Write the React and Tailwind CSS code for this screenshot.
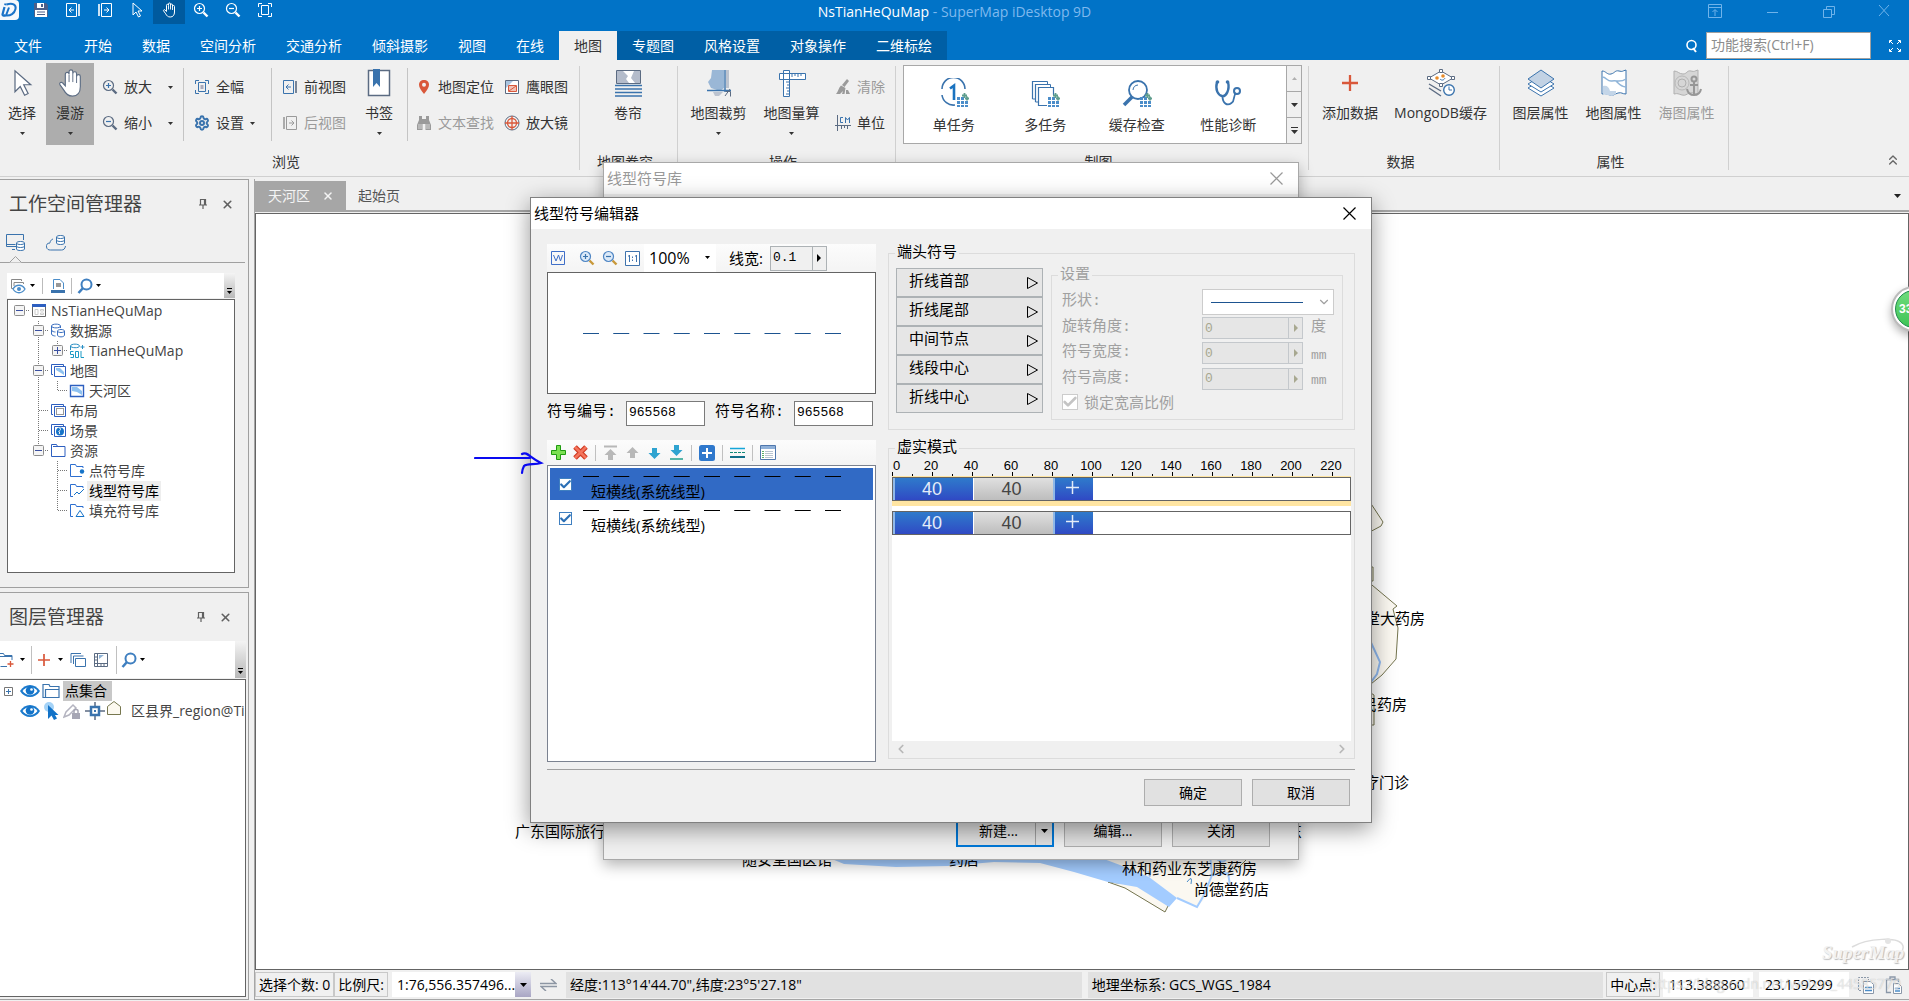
import { useState } from 'react'
import { Check, X, ChevronDown, ChevronLeft, ChevronRight, ChevronsUp, Settings } from 'lucide-react'

const BLUE = '#3a73ad'
const DARK = '#5b6b82'
const RED = '#d9583b'
const GREY = '#9a9a9a'

function Icon({ w = 16, h = 16, box, children, className = '' }) {
  return (
    <svg width={w} height={h} viewBox={box || `0 0 ${w} ${h}`} fill="none" className={`shrink-0 ${className}`} aria-hidden="true">
      {children}
    </svg>
  )
}

const Caret = ({ className = '' }) => (
  <Icon w={7} h={4} className={className}><path d="M0 0h7L3.500 4z" fill="currentColor" /></Icon>
)
const SmallCaret = ({ className = '' }) => (
  <Icon w={5} h={3} className={className}><path d="M0 0h5L2.500 3z" fill="currentColor" /></Icon>
)

/* ---------- icons ---------- */

const ARROW_PATH = 'M4 1v12l3-3 2.500 5 2-1-2.500-5h4z'
const HAND_PATH = 'M5.500 9.500V3.300a1 1 0 0 1 2 0V2a1 1 0 0 1 2 0v1a1 1 0 0 1 2 0v1.500a1 1 0 0 1 2 0V10c0 3-1.500 5-4.200 5-2.500 0-3.600-1.300-4.600-3.200L2.600 8.900c-.5-1 .8-1.700 1.500-.9z'

const PointerIcon = ({ size = 16, stroke = '#fff', fill = 'none' }) => (
  <Icon w={size} h={size} box="0 0 16 16"><path d={ARROW_PATH} stroke={stroke} fill={fill} strokeWidth={size > 20 ? 0.7 : 1} /></Icon>
)
const HandIcon = ({ size = 16, stroke = '#fff', fill = 'none' }) => (
  <Icon w={size} h={size} box="0 0 16 16">
    <path d={HAND_PATH} stroke={stroke} fill={fill} strokeWidth={size > 20 ? 0.6 : 1} />
    <path d="M7.500 3.500v4M9.500 3v4.500M11.500 4v4" stroke={stroke} strokeWidth={size > 20 ? 0.5 : 0.9} />
  </Icon>
)
const ZoomIcon = ({ minus, ring = DARK, mark = BLUE, handle = DARK, fill = 'none', size = 16 }) => (
  <Icon w={size} h={size} box="0 0 16 16">
    <path d="m10.500 10.500 4 4" stroke={handle} strokeWidth="2.400" />
    <circle cx="6.500" cy="6.500" r="5" stroke={ring} strokeWidth="1.200" fill={fill} />
    <path d={minus ? 'M4 6.500h5' : 'M4 6.500h5M6.500 4v5'} stroke={mark} strokeWidth="1.200" />
  </Icon>
)
const ExtentIcon = ({ c = '#fff', inner = 'none' }) => (
  <Icon>
    <path d="M1.500 5V1.500H5M11 1.500h3.500V5M14.500 11v3.500H11M5 14.500H1.500V11" stroke={c} />
    <path d="M4.500 3.500h7v9h-7z" stroke={c} />
    <path d="M6.500 6h3v4h-3z" fill={inner} />
  </Icon>
)
const ViewIcon = ({ next, c = BLUE, side = DARK }) => (
  <Icon>
    <path d={next ? 'M4.500 1.500h10v13h-10z' : 'M1.500 1.500h10v13h-10z'} stroke={c} />
    <path d={next ? 'M2 2v12' : 'M14 2v12'} stroke={side} strokeWidth="1.600" />
    <path d={next ? 'M7 8h5M9.500 5.500 12 8l-2.500 2.500' : 'M9 8H4M6.500 5.500 4 8l2.500 2.500'} stroke={c} />
  </Icon>
)
const SaveIcon = () => (
  <Icon>
    <path d="M1 1h12l2 2v12H1z" fill="#4a5f8a" />
    <path d="M4 1h7v5H4z" fill="#fff" /><path d="M8 2h2v3H8z" fill="#4a5f8a" />
    <path d="M2 8h12v7H2z" fill="#fff" /><path d="M4 10h8M4 12.500h8" stroke="#4a5f8a" />
  </Icon>
)
const LogoIcon = () => (
  <Icon w={20} h={20}>
    <rect x="-4" width="23" height="20" rx="4" fill="#f4f8fc" />
    <path d="M4.500 7 2.500 14.500c0 1.500 1.500 1.500 3 .5M5.600 3.500 5.200 5.200" stroke="#1a73c8" strokeWidth="2.200" />
    <path d="M6.500 4.500c6-2 10 0 9 4.500-1 4.500-5 7-9.500 6.500L9 7.500" stroke="#1a73c8" strokeWidth="2" />
  </Icon>
)
const BookmarkIcon = () => (
  <Icon w={24} h={28}>
    <path d="M1.500 1.500h21v25h-21z" stroke={DARK} fill="#fff" strokeWidth="1.500" />
    <path d="M6 0h7v18l-3.500-4L6 18z" fill={BLUE} />
  </Icon>
)
const PinIcon = () => (
  <Icon><path d="M8 1c-3 0-5 2-5 4.800C3 9.500 8 15 8 15s5-5.500 5-9.200C13 3 11 1 8 1z" fill={RED} /><circle cx="8" cy="5.800" r="2" fill="#f0f0f0" /></Icon>
)
const EagleIcon = () => (
  <Icon>
    <path d="M1.500 1.500h13v13h-13z" stroke={DARK} fill="#fff" />
    <path d="M2 2h7L2 9z" fill="#a9c4e0" />
    <path d="M4.500 6.500h8v6h-8z" stroke={RED} fill="#f2c3b8" /><path d="m5 12 7-5" stroke={RED} />
  </Icon>
)
const BinocularIcon = () => (
  <Icon>
    <path d="M3 1h3v3h4V1h3v4l2 5v5H9.500V9h-3v6H1v-5l2-5z" fill={GREY} />
    <path d="M3 9v5M5 9v5M11 9v5M13 9v5" stroke="#f0f0f0" strokeWidth=".7" />
  </Icon>
)
const TargetIcon = () => (
  <Icon><circle cx="8" cy="8" r="7" stroke={DARK} /><circle cx="8" cy="8" r="4.500" stroke={RED} strokeWidth="1.300" /><path d="M8 1v14M1 8h14" stroke={RED} strokeWidth="1.300" /></Icon>
)
const SwipeIcon = () => (
  <Icon w={27} h={28}>
    <path d="M1.500 1.500h24v13h-24z" stroke={DARK} fill="#fff" />
    <path d="M2 2h6l5 5-2 3 3 4H2zM19 2h6v12h-5l-4-5z" fill="#b4bccb" />
    <path d="M0 16.500h27M0 20h27M0 23.500h27M0 27h27" stroke={BLUE} strokeWidth="1.600" />
  </Icon>
)
const ClipIcon = () => (
  <Icon w={28} h={28}>
    <path d="M7 1h12v18l-4 3-9-3-3-6 3-4z" fill="#9ab7d6" />
    <path d="M8 23h10l-4 4h-4zM21 1h3v18h-3z" fill="#bcc3cf" />
    <path d="M2 21.500h24M20 1v22" stroke={BLUE} strokeWidth="1.400" />
    <path d="M20.500 22.500h5v5M25 20l-5 7" stroke={DARK} />
  </Icon>
)
const MeasureIcon = () => (
  <Icon w={28} h={28}>
    <path d="M1.500 4.500h26v6h-26zM5.500 1.500h6v26h-6z" stroke={BLUE} fill="#fff" />
    <path d="M6 5h5v5H6z" fill="#fff" />
    <path d="M14 5v3M17 5v2M20 5v3M23 5v2M8 13h3M9 16h2M8 19h3M9 22h2M8 25h3" stroke={BLUE} />
  </Icon>
)
const BroomIcon = () => (
  <Icon><path d="M12 0 14 2 9.500 8 7 6z" fill={GREY} /><path d="M6 6.500 10.500 9l-1 6H7l1-3-3 3H1c2-2 2.500-6 5-8.500zM11 11h2l2 4h-4z" fill={GREY} /></Icon>
)
const UnitIcon = () => (
  <Icon>
    <path d="M2.500 0v16M0 10.500h16M6.500 10v4M9.500 10v3M12.500 10v4" stroke={DARK} />
    <path d="M8 2.500H5.500v5H8M10.500 8V2.500l2 2.500 2-2.500V8" stroke={BLUE} />
  </Icon>
)
const Bits = () => (
  <g>
    <path d="M18 19h3v3h-3zM22 19h3v3h-3zM18 23h3v3h-3zM22 23h3v3h-3zM26 23h3v3h-3zM18 27h3v2h-3zM22 27h3v2h-3zM26 27h3v2h-3z" fill="#4b8dc9" />
    <path d="M23 17.500h5M25.500 15v5M26 20.500h4M28 18.500v4" stroke="#5f9d8d" strokeWidth="1.800" />
  </g>
)
const SingleTaskIcon = () => (
  <Icon w={30} h={30}>
    <path d="M3 11A11.500 11.500 0 0 1 26 11M3 17a11.500 11.500 0 0 0 13 10" stroke={BLUE} strokeWidth="1.600" />
    <path d="M11 10.500 15 7.500V22" stroke="#1a73c0" strokeWidth="2.600" />
    <Bits />
  </Icon>
)
const MultiTaskIcon = () => (
  <Icon w={30} h={30}>
    <path d="M2.500 21V3.500h15M5.500 24V6.500h15M17 27.500H8.500v-18h15V17" stroke={BLUE} strokeWidth="1.200" />
    <path d="M2.500 21h3M5.500 24h3M17.500 3.500v3M20.500 6.500v3" stroke={BLUE} />
    <Bits />
  </Icon>
)
const CacheCheckIcon = () => (
  <Icon w={30} h={30}>
    <circle cx="16" cy="12" r="9" stroke={BLUE} strokeWidth="1.800" /><path d="M11 12a5.500 5.500 0 0 1 5-5" stroke={BLUE} />
    <path d="m10 19-8 8" stroke={BLUE} strokeWidth="3.600" />
    <Bits />
  </Icon>
)
const DiagnoseIcon = () => (
  <Icon w={30} h={30}>
    <path d="M4 4c-2 8 1 13 5 14s8-6 6-14" stroke={BLUE} strokeWidth="2.400" />
    <path d="M9.500 18c0 8 5 10 9 7 4-2.500 1-7 4.500-10" stroke={BLUE} strokeWidth="1.800" />
    <circle cx="24" cy="13" r="3" stroke={BLUE} strokeWidth="2" /><circle cx="4.500" cy="4" r="1.800" fill={BLUE} /><circle cx="14.500" cy="4" r="1.800" fill={BLUE} />
  </Icon>
)
const AddIcon = ({ size = 16 }) => (
  <Icon w={size} h={size} box="0 0 14 14"><path d="M7 0v14M0 7h14" stroke={RED} strokeWidth="2" /></Icon>
)
const MongoIcon = () => (
  <Icon w={28} h={28}>
    <path d="m2 9 12-7 12 7-12 7z" stroke={DARK} fill="#fff" /><path d="M12.500.5h3v3h-3zM.5 7.500h3v3h-3zM24.500 7.500h3v3h-3zM12.500 14.500h3v3h-3z" fill="#fff" stroke={DARK} />
    <path d="m2 15 12 7M2 19l12 8" stroke={DARK} strokeWidth="1.400" />
    <circle cx="10" cy="9" r="1.800" fill="#e78c2c" /><circle cx="16" cy="7" r="1.800" fill="#e78c2c" /><path d="M13 10c2 2 4 1 5-1" stroke={BLUE} />
    <circle cx="22" cy="21" r="5.300" stroke={BLUE} strokeWidth="1.400" fill="#fff" /><path d="M22 17.500V21h3" stroke={BLUE} />
  </Icon>
)
const LayersIcon = () => (
  <Icon w={28} h={28}>
    <path d="m1 19 13 8 13-8-13-8z" fill="#fff" stroke={BLUE} /><path d="m1 15 13 8 13-8-13-8z" fill="#fff" stroke={BLUE} />
    <path d="m1 10 13-9 13 9-13 9z" fill="#c2d2e4" stroke={BLUE} />
  </Icon>
)
const MapPropIcon = () => (
  <Icon w={28} h={28}>
    <path d="M2 2c4 0 5 4 9 3s4-4 8-3 3 0 7-1v24c-4 0-4-2-8-1s-4 3-8 2-4-2-8-1z" fill="#fff" stroke={BLUE} />
    <path d="M3 17c4-1 6 1 7 5h6v3l-4 2-9-2z" fill="#c3d5e8" /><path d="M2 8c5 0 5 5 10 4s8 2 14-2M16 12c3 3 5 6 10 6" stroke="#8fb4d8" strokeWidth="1.500" />
  </Icon>
)
const SeaMapIcon = () => (
  <Icon w={30} h={28}>
    <path d="M2 2c4 0 5 3 9 3s4-4 8-3 3 0 7-1v24c-4 0-4-2-8-1s-4 3-8 2-4-2-8-1z" fill="#d6d6d6" stroke="#b0b0b0" />
    <circle cx="10" cy="14" r="4" stroke="#b0b0b0" /><circle cx="10" cy="14" r="7" stroke="#b8b8b8" />
    <circle cx="22" cy="10" r="2.500" stroke="#979797" strokeWidth="2" /><path d="M22 12v14M18 16h8M15 20c1 5 4 6 7 6s6-1 7-6" stroke="#979797" strokeWidth="2" />
  </Icon>
)

const PushPin = () => (
  <Icon w={8} h={10}><path d="M1.500 0v5.500M1.500.5H6M5.500 0v5.500M6.500 0v5.500M0 6h8M4 6v4" stroke="#606060" strokeWidth="1.200" /></Icon>
)
const FindIcon = () => (
  <Icon><circle cx="9.500" cy="6.500" r="5" stroke="#3f7fc0" strokeWidth="2" /><path d="m6 10-4.500 5" stroke="#3f7fc0" strokeWidth="2.600" /></Icon>
)
const Db = ({ x, y }) => (
  <path transform={`translate(${x} ${y})`} d="M.5 2v6c0 2 8 2 8 0V2c0-2-8-2-8 0c0 2 8 2 8 0M.5 5c0 2 8 2 8 0" stroke={BLUE} fill="#fff" />
)
const WorkspaceDbIcon = () => (
  <Icon w={20} h={18}><path d="M9 15.500H6M10 12.500H.5v-12h17V6M.5 10.500h9" stroke={BLUE} /><Db x={10} y={7} /></Icon>
)
const CloudDbIcon = () => (
  <Icon w={20} h={18}><path d="M7 5C4 6 4 9 4 9c-3 0-4 2-3.500 4 .5 2.500 2 3 4 3h11c2 0 3.500-1 4-4" stroke={BLUE} /><Db x={10} y={1} /></Icon>
)

const TREE_ICONS = {
  workspace: <Icon><path d="M1.500 1.500h13v12h-13z" stroke="#666" fill="#fff" /><path d="M1 1h14v3H1z" fill="#2d5fc0" /><path d="M4 6.500h3v5H4zM9.500 6.500h3v1.500h-3zM9.500 10h3v1.500h-3z" stroke="#ccc" /></Icon>,
  datasource: <Icon><path d="M1.500 3v8c0 1.500 3 2 4 2M1.500 3c0-2.500 9-2.500 9 0s-9 2.500-9 0M1.500 7c0 1.500 3 2 4 2M10.500 3v2" stroke="#3b6fc0" /><path d="M7.500 8v4c0 2.500 7 2.500 7 0V8c0-2-7-2-7 0s7 2 7 0" stroke="#3b6fc0" fill="#fff" /></Icon>,
  sql: <Icon><path d="M1.500 7V3c0-2.500 9-2.500 9 0s-9 2-9 0M13.500 2v4M11.500 4h4" stroke="#2b8fc4" /><path d="M4.500 8.500h-3v3h3v3h-3M6.500 8.500h3v6h-3zM12 8v6.500h3" stroke="#1c9ac4" /></Icon>,
  maps: <Icon><path d="M3 11.500H1.500v-10h12V3" stroke="#2d5fc0" /><path d="M4.500 3.500h11v10h-11z" stroke="#2d5fc0" fill="#fff" /><path d="M6 5h4l4 4v3l-3-2-5-3z" fill="#8ec1f0" /></Icon>,
  map: <Icon><path d="M1.500 2.500h13v11h-13z" stroke="#2d5fc0" fill="#fff" strokeWidth="1.400" /><path d="M3 4h5l5 4v4l-5-3-5-1z" fill="#8ec1f0" /></Icon>,
  layout: <Icon><path d="M3 11.500H1.500v-10h12V3" stroke="#2d5fc0" /><path d="M4.500 3.500h11v10h-11z" stroke="#2d5fc0" fill="#fff" /><path d="M6.500 5.500h7v6h-7z" stroke="#333" strokeDasharray="1 1" /></Icon>,
  scene: <Icon><path d="M3 11.500H1.500v-10h12V3" stroke="#2d5fc0" /><path d="M4.500 3.500h11v10h-11z" stroke="#2d5fc0" fill="#fff" /><circle cx="10" cy="8.500" r="4" fill="#1673c8" /><path d="M9 5c3 0 1 3 0 3s2 2 0 3" stroke="#fff" /></Icon>,
  folder: <Icon><path d="M1.500 13.500v-12h5l1 2h7.500v10zM3 3.500h5" stroke="#2d5fc0" fill="#fff" /></Icon>,
  point: <Icon><path d="M13 13.500H1.500v-12h5l1 2H14V5" stroke="#2d6fd0" /><circle cx="13" cy="8.500" r="2.200" fill="#1673c8" /></Icon>,
  line: <Icon><path d="M4 13.500H1.500v-12h5l1 2H14V5" stroke="#2d6fd0" /><path d="m5 12 3-3 2 2 5-5" stroke="#1673c8" /></Icon>,
  fill: <Icon><path d="M4 13.500H1.500v-12h5l1 2H14V5" stroke="#2d6fd0" /><path d="m7 13.500 4-6 4 6z" stroke="#1673c8" /></Icon>,
}

/* ---------- title bar + ribbon ---------- */

const MENU = ['开始', '数据', '空间分析', '交通分析', '倾斜摄影', '视图', '在线']
const CONTEXT_MENU = ['专题图', '风格设置', '对象操作', '二维标绘']

function TitleBar() {
  return (
    <header className="bg-[#0173c7] text-white">
      <div className="relative flex h-[31px] items-start justify-between">
        <div className="flex items-start">
          <LogoIcon />
          <div className="ml-[5px] flex">
            {[<SaveIcon />, <ViewIcon c="#fff" side="#fff" />, <ViewIcon next c="#fff" side="#fff" />, <PointerIcon />, <HandIcon />,
              <ZoomIcon ring="#fff" mark="#fff" handle="#fff" />, <ZoomIcon minus ring="#fff" mark="#fff" handle="#fff" />, <ExtentIcon />].map((icon, i) => (
              <button key={i} className={`flex h-6 w-8 items-center justify-center pb-1 ${i === 4 ? 'bg-[#005a9e]' : ''}`}>{icon}</button>
            ))}
          </div>
        </div>
        <h1 className="absolute left-1/2 top-0 -translate-x-1/2 whitespace-nowrap text-sm leading-6">
          NsTianHeQuMap <span className="text-[#7fb9ee]">- SuperMap iDesktop 9D</span>
        </h1>
        <div className="flex pr-[17px] text-[#6fb3ea]">
          <button className="mr-10 py-1"><Icon><path d="M.5 .5h13v13H.5zM1 3.500h13M7 12V6M4.500 8 7 5.500 9.500 8" stroke="currentColor" /></Icon></button>
          <button className="mr-10 py-1"><Icon><path d="M3 8.500h11" stroke="currentColor" /></Icon></button>
          <button className="mr-10 py-1"><Icon><path d="M3.500 5.500h8v8h-8zM6.500 5V2.500h8v8H12" stroke="currentColor" /></Icon></button>
          <button className="py-1"><Icon><path d="m3 1 10 11M13 1 3 12" stroke="currentColor" /></Icon></button>
        </div>
      </div>
      <nav className="flex h-[29px] items-stretch text-sm">
        <button className="w-[69px] pl-[14px] text-left">文件</button>
        {MENU.map(m => <button key={m} className="px-[15px]">{m}</button>)}
        <button className="bg-[#f0f0f0] px-[15px] text-[#333]">地图</button>
        <div className="flex bg-[#005fa5]">
          {CONTEXT_MENU.map(m => <button key={m} className="px-[15px]">{m}</button>)}
        </div>
        <div className="ml-auto flex items-center pr-[7px]">
          <Icon w={13} h={14}><circle cx="6.500" cy="6" r="4.500" stroke="#fff" strokeWidth="1.600" /><path d="m8 9 3 4" stroke="#fff" strokeWidth="2" /></Icon>
          <input aria-label="功能搜索" placeholder="功能搜索(Ctrl+F)" className="ml-2 h-[27px] w-[165px] border border-[#a0a0a0] bg-white pl-1 pb-0.5 text-sm text-black outline-none placeholder:text-[#8c8c8c]" />
          <button className="ml-[17px]" aria-label="全屏">
            <Icon w={14} h={14}><path d="M1.500 4V1.500H4M2 2l3 3M10 1.500h2.500V4M12 2 9 5M12.500 10v2.500H10M12 12 9 9M4 12.500H1.500V10M2 12l3-3" stroke="#fff" /></Icon>
          </button>
        </div>
      </nav>
    </header>
  )
}

function BigButton({ icon, label, arrow, active, disabled, className = '' }) {
  return (
    <button disabled={disabled} className={`mt-[3px] flex h-[82px] shrink-0 flex-col items-center whitespace-nowrap ${active ? 'bg-[#adadad]' : ''} ${disabled ? 'text-[#9a9a9a]' : 'text-[#333]'} ${className}`}>
      <span className="mt-1.5 flex h-7 items-center">{icon}</span>
      <span className="mt-[7px] leading-[18px]">{label}</span>
      {arrow && <SmallCaret className="mt-2.5" />}
    </button>
  )
}

function SmallButton({ icon, label, arrow, wide, disabled }) {
  return (
    <button disabled={disabled} className={`flex h-9 items-center gap-1.5 whitespace-nowrap ${disabled ? 'text-[#9a9a9a]' : 'text-[#333]'}`}>
      {icon}
      <span>{label}</span>
      {arrow && <SmallCaret className={wide ? 'ml-2.5' : ''} />}
    </button>
  )
}

const Column = ({ className = '', children }) => <div className={`flex shrink-0 flex-col pt-[9px] ${className}`}>{children}</div>
const Rule = () => <div className="mt-2 h-[73px] w-px shrink-0 bg-[#c4c4c4]" />

function Group({ caption, className = '', children }) {
  return (
    <section className={`relative flex shrink-0 flex-col after:absolute after:bottom-1.5 after:right-0 after:top-1.5 after:w-px after:bg-[#d0d0d0] ${className}`}>
      <div className="flex h-[90px]">{children}</div>
      <div className="flex-1 pr-2 text-center leading-7">{caption}</div>
    </section>
  )
}

const GALLERY = [
  ['单任务', <SingleTaskIcon />],
  ['多任务', <MultiTaskIcon />],
  ['缓存检查', <CacheCheckIcon />],
  ['性能诊断', <DiagnoseIcon />],
]

function Ribbon() {
  return (
    <div className="flex h-[117px] border-b border-[#d0d0d0] text-sm text-[#333]">
      <Group caption="浏览" className="w-[580px]">
        <BigButton icon={<PointerIcon size={28} stroke={DARK} fill="#fff" />} label="选择" arrow className="mr-0.5 w-11" />
        <BigButton icon={<HandIcon size={30} stroke={DARK} fill="#fff" />} label="漫游" arrow active className="w-12" />
        <Column className="w-[89px] pl-2">
          <SmallButton icon={<ZoomIcon />} label="放大" arrow wide />
          <SmallButton icon={<ZoomIcon minus />} label="缩小" arrow wide />
        </Column>
        <Rule />
        <Column className="w-[87px] pl-2.5">
          <SmallButton icon={<ExtentIcon c={BLUE} inner="#aab" />} label="全幅" />
          <SmallButton icon={<Settings size={16} color={BLUE} strokeWidth={3} />} label="设置" arrow />
        </Column>
        <Rule />
        <Column className="w-[82px] pl-2.5">
          <SmallButton icon={<ViewIcon />} label="前视图" />
          <SmallButton icon={<ViewIcon next c={GREY} side={GREY} />} label="后视图" disabled />
        </Column>
        <BigButton icon={<BookmarkIcon />} label="书签" arrow className="mr-[3px] w-[50px]" />
        <Rule />
        <Column className="w-24 pl-2">
          <SmallButton icon={<PinIcon />} label="地图定位" />
          <SmallButton icon={<BinocularIcon />} label="文本查找" disabled />
        </Column>
        <Column>
          <SmallButton icon={<EagleIcon />} label="鹰眼图" />
          <SmallButton icon={<TargetIcon />} label="放大镜" />
        </Column>
      </Group>
      <Group caption="地图卷帘" className="w-[98px]">
        <BigButton icon={<SwipeIcon />} label="卷帘" className="ml-4 w-16" />
      </Group>
      <Group caption="操作" className="w-[218px]">
        <BigButton icon={<ClipIcon />} label="地图裁剪" arrow className="ml-1 w-[73px]" />
        <BigButton icon={<MeasureIcon />} label="地图量算" arrow className="w-[73px]" />
        <Column className="pl-[7px]">
          <SmallButton icon={<BroomIcon />} label="清除" disabled />
          <SmallButton icon={<UnitIcon />} label="单位" />
        </Column>
      </Group>
      <Group caption="制图" className="w-[413px] px-[7px]">
        <div className="mt-[5px] flex h-[79px] w-full border border-[#a8a8a8] bg-white">
          <div className="grid flex-1 grid-cols-4 pl-1 pr-3">
            {GALLERY.map(([label, icon]) => (
              <button key={label} className="flex flex-col items-center pt-3 text-[#333]">
                {icon}
                <span className="mt-2 leading-[18px]">{label}</span>
              </button>
            ))}
          </div>
          <div className="flex w-[15px] flex-col divide-y divide-[#a8a8a8] border-l border-[#a8a8a8] bg-[#f0f0f0]">
            <button className="flex flex-1 items-center justify-center text-[#b0b0b0]"><SmallCaret className="rotate-180" /></button>
            <button className="flex flex-1 items-center justify-center"><Caret /></button>
            <button className="flex flex-1 flex-col items-center justify-center gap-0.5"><span className="h-px w-[7px] bg-[#333]" /><Caret /></button>
          </div>
        </div>
      </Group>
      <Group caption="数据" className="w-[191px]">
        <BigButton icon={<AddIcon />} label="添加数据" className="ml-1 w-[74px]" />
        <BigButton icon={<MongoIcon />} label="MongoDB缓存" className="w-[107px]" />
      </Group>
      <Group caption="属性" className="w-[229px]">
        <BigButton icon={<LayersIcon />} label="图层属性" className="ml-1 w-[73px]" />
        <BigButton icon={<MapPropIcon />} label="地图属性" className="w-[73px]" />
        <BigButton icon={<SeaMapIcon />} label="海图属性" disabled className="w-[73px]" />
      </Group>
      <button className="mb-2 ml-auto mr-2 self-end text-[#666]" aria-label="折叠功能区"><ChevronsUp size={16} strokeWidth={2} /></button>
    </div>
  )
}

/* ---------- left docks ---------- */

const TREE = [
  { label: 'NsTianHeQuMap', icon: 'workspace', cells: ['minus-root'] },
  { label: '数据源', icon: 'datasource', cells: ['', 'minus'] },
  { label: 'TianHeQuMap', icon: 'sql', cells: ['', 'v', 'plus'] },
  { label: '地图', icon: 'maps', cells: ['', 'minus'] },
  { label: '天河区', icon: 'map', cells: ['', 'v', 'end'] },
  { label: '布局', icon: 'layout', cells: ['', 'tee'] },
  { label: '场景', icon: 'scene', cells: ['', 'tee'] },
  { label: '资源', icon: 'folder', cells: ['', 'minus-last'] },
  { label: '点符号库', icon: 'point', cells: ['', '', 'tee'] },
  { label: '线型符号库', icon: 'line', cells: ['', '', 'tee'], selected: true },
  { label: '填充符号库', icon: 'fill', cells: ['', '', 'end'] },
]

function TreeCell({ kind }) {
  const top = kind !== '' && kind !== 'minus-root'
  const bottom = ['v', 'tee', 'minus'].includes(kind)
  const boxed = kind.startsWith('minus') || kind === 'plus'
  const across = kind !== '' && kind !== 'v'
  return (
    <Icon w={19} h={20}>
      <g stroke="#777" strokeDasharray="1 1">
        {top && <path d="M9.500 0v10" />}
        {bottom && <path d="M9.500 10v10" />}
        {across && <path d="M10 9.500h9" />}
      </g>
      {boxed && <rect x="4.500" y="4.500" width="10" height="10" rx="1" fill="#f4f4f4" stroke="#8c8c8c" />}
      {boxed && <path d={kind === 'plus' ? 'M6 9.500h7M9.500 6v7' : 'M6 9.500h7'} stroke="#3a4fa0" />}
    </Icon>
  )
}

const DockTitle = ({ children }) => (
  <div className="flex h-12 shrink-0 items-center pl-[9px] pr-3.5 text-[#444]">
    <h2 className="flex-1 text-[19px]">{children}</h2>
    <button className="mr-3.5" aria-label="固定"><PushPin /></button>
    <button aria-label="关闭"><X size={13} strokeWidth={3} color="#606060" /></button>
  </div>
)

const Overflow = () => (
  <button className="flex w-[11px] flex-col items-center justify-end gap-0.5 bg-gradient-to-b from-[#f4f4f4] to-[#b8b8b8] pb-1" aria-label="更多">
    <span className="h-px w-[5px] bg-black" /><SmallCaret />
  </button>
)

function WorkspaceDock() {
  return (
    <section className="flex h-[409px] shrink-0 flex-col border border-l-0 border-[#a0a0a0]">
      <DockTitle>工作空间管理器</DockTitle>
      <div className="mr-[3px] flex h-[35px] shrink-0 items-start gap-5 border-b border-[#a0a0a0] pl-1.5 pt-1.5">
        <button className="flex flex-col items-center"><WorkspaceDbIcon /><Icon w={14} h={12}><path d="m.5 10.500 6-6 6 6" stroke="#a0a0a0" fill="#f0f0f0" /></Icon></button>
        <button><CloudDbIcon /></button>
      </div>
      <div className="ml-[7px] mr-[13px] mt-2.5 flex h-[25px] shrink-0 justify-between bg-white">
        <div className="flex items-center pl-[3px]">
          <button className="flex items-center gap-1">
            <Icon><path d="M3 10.500H1.500v-9h10V3M4 8V4.500h9.500V6" stroke="#888" /><path d="M3 11c3-5 9-5 12 0-3 5-9 5-12 0z" fill="#fff" stroke="#4b8dc9" strokeWidth="1.300" /><circle cx="9" cy="11" r="2" fill="#4b8dc9" /></Icon>
            <SmallCaret />
          </button>
          <span className="mx-[7px] h-4 w-px bg-[#bbb]" />
          <button><Icon><path d="M3.500 11V1.500H10L13.500 5v6" stroke="#4b8dc9" /><path d="M6 5h5v4H6z" fill="#999" /><path d="M1 12h14v3H1z" fill={BLUE} /></Icon></button>
          <span className="mx-[5px] h-4 w-px bg-[#bbb]" />
          <button className="flex items-center gap-[3px]"><FindIcon /><SmallCaret /></button>
        </div>
        <Overflow />
      </div>
      <ul className="mb-3.5 ml-[7px] mr-[13px] mt-px flex-1 border border-[#646464] bg-white pt-px text-sm text-[#444]">
        {TREE.map(node => (
          <li key={node.label} className="flex h-5 items-center pl-0.5">
            {node.cells.map((kind, i) => <TreeCell key={i} kind={kind} />)}
            <span className="ml-0.5">{TREE_ICONS[node.icon]}</span>
            <span className={`ml-0.5 px-0.5 leading-5 ${node.selected ? 'bg-[#eee] text-black' : ''}`}>{node.label}</span>
          </li>
        ))}
      </ul>
    </section>
  )
}

const Eye = () => (
  <Icon w={20} h={14}><path d="M0 7c5-8 15-8 20 0-5 8-15 8-20 0z" fill="#1979cc" /><path d="M2.500 7c4-5.500 11-5.500 15 0-4 5.500-11 5.500-15 0z" fill="#fff" /><circle cx="10" cy="6.500" r="4.300" fill="#1373c8" /><circle cx="11.500" cy="5.500" r="1.300" fill="#fff" /></Icon>
)

function LayerDock() {
  return (
    <section className="flex flex-1 flex-col border border-l-0 border-[#a0a0a0] pb-0.5 pr-0.5">
      <DockTitle>图层管理器</DockTitle>
      <div className="flex h-[37px] shrink-0 justify-between bg-white">
        <div className="flex items-center">
          <button className="flex items-center gap-1.5">
            <Icon w={14} h={16}><path d="M7 14.500H.5M0 1.500h3.500l1 2h7.500V8M0 4.500h12" stroke={BLUE} /><path d="M10.500 9v6M7.500 12h6" stroke={RED} strokeWidth="1.300" /></Icon>
            <SmallCaret />
          </button>
          <span className="mx-1.5 h-7 w-px bg-[#c0c0c0]" />
          <button className="flex items-center gap-2"><AddIcon size={12} /><SmallCaret /></button>
          <button className="ml-[7px]"><Icon><path d="M1 11V1.500h10M3.500 12V4h10" stroke={BLUE} /><path d="M5.500 6.500h10v8h-10z" stroke={BLUE} fill="#fff" /></Icon></button>
          <button className="ml-2"><Icon w={14} h={14}><path d="M.5 .5h13v13H.5zM3.500 1v13M1 10.500h13M7 11v3M10 11v3M1 4h2M1 7h2" stroke={DARK} /><path d="M5 2h5L5 6z" fill="#8fb4d8" /></Icon></button>
          <span className="ml-2 mr-1 h-7 w-px bg-[#c0c0c0]" />
          <button className="flex items-center gap-[3px]"><FindIcon /><SmallCaret /></button>
        </div>
        <Overflow />
      </div>
      <ul className="mt-px flex-1 overflow-hidden border border-l-0 border-[#646464] bg-white pt-px text-sm">
        <li className="flex h-5 items-center pl-1">
          <Icon w={9} h={9}><path d="M.5 .5h8v8h-8z" stroke="#777" /><path d="M2 4.500h5M4.500 2v5" stroke={BLUE} /></Icon>
          <span className="ml-[7px]"><Eye /></span>
          <Icon w={18} h={16} className="ml-0.5"><path d="M1 14.500v-13h6l1 2h9v11zM3.500 14V6.500h13" stroke={BLUE} strokeWidth="1.200" fill="#fff" /></Icon>
          <span className="ml-[3px] bg-[#c8c8c8] pl-0.5 pr-[5px] leading-5">点集合</span>
        </li>
        <li className="flex h-5 items-center whitespace-nowrap pl-5 text-[#444]">
          <Eye />
          <Icon w={16} h={18} className="ml-[3px]"><circle cx="6" cy="5" r="5" fill="#a5d3f7" /><path d="M5 3v14l3.500-3.500L11 18l3-1.500-2-3.500h3.500z" fill="#1373c8" /></Icon>
          <Icon w={18} h={16} className="ml-1"><path d="M1 14l2-5 7-7 3 3-7 7z" stroke="#b4b4c0" strokeWidth="1.500" /><path d="M9 10h8v6H9z" fill="#a6a6b4" /><path d="M11 10V8c0-2 4-2 4 0v2" stroke="#a6a6b4" strokeWidth="1.500" /></Icon>
          <Icon w={20} h={18} className="ml-1"><path d="M10 0v18M0 9h20" stroke={DARK} strokeWidth="1.500" /><path d="M6 5h8v8H6z" fill="#fff" stroke={BLUE} strokeWidth="2.500" /><path d="M9 8h2v2H9z" fill={BLUE} /></Icon>
          <Icon w={14} h={14} className="mb-1.5 ml-0.5"><path d="M.5 13.500v-8L7 .5l6.500 5v8z" fill="#fcf9f0" stroke="#77774f" /></Icon>
          <span className="ml-2.5">区县界_region@TianHeQuMap</span>
        </li>
      </ul>
    </section>
  )
}

/* ---------- map pane ---------- */

function MapPane() {
  return (
    <div className="relative flex-1 overflow-hidden border border-[#646464] bg-white text-[15px] leading-5 text-black">
      <svg width="1200" height="756" viewBox="256 214 1200 756" fill="none" className="absolute left-0 top-0" aria-hidden="true">
        <g fill="#fbf8f1" stroke="#74744e">
          <path d="M1366 496 1383 522 1381 526 1366 534" />
          <path d="M1366 567h7v14h-7M1366 690l8 5v30h-8" />
          <path d="M1366 580 1397 606 1393 609 1395 617 1398 628 1396 659 1382 675 1366 688" />
          <path d="M1108 882 1125 888 1165 912 1169 904 1140 885z" />
        </g>
        <path d="M1060 850h190l-10 20-18 10-25 27-20-9-60-34z" fill="#fbf8f1" />
        <path d="M810 850 844 864 896 867 948 866 994 862 1040 863 1074 872 1108 882 1137 887 1169 907 1177 898 1149 877 1120 865 1080 850z" fill="#a3ccff" />
        <path d="M1177 898 1197 907 1204 895 1212 875 1210 855M1212 875 1228 873 1230 885M1150 877l-2-6M1103 855v12M1216 858q8 8 12-2" stroke="#a3ccff" strokeWidth="2" />
        <path d="m1238 868 8-8M1222 890l6 5" stroke="#74744e" />
        <path d="M1187 882q6-8 4 2" stroke="#4b8dc9" />
        <path d="M1368 636 1380 662 1377 674 1368 686" stroke="#8fb9f0" strokeWidth="2" />
      </svg>
      <span className="absolute left-[259px] top-[607px]">广东国际旅行社</span>
      <span className="absolute left-[486px] top-[635px]">随安堂国医馆</span>
      <span className="absolute left-[693px] top-[635px]">药店</span>
      <span className="absolute left-[866px] top-[644px]">林和药业东芝康药房</span>
      <span className="absolute left-[938px] top-[665px]">尚德堂药店</span>
      <span className="absolute left-[1031px] top-[607px]">东</span>
      <span className="absolute left-[1109px] top-[394px]">堂大药房</span>
      <span className="absolute left-[1106px] top-[480px]">民药房</span>
      <span className="absolute left-[1108px] top-[558px]">疗门诊</span>
      <div className="absolute bottom-1 right-1 h-7 w-[82px]">
        <svg width="82" height="28" fill="none" className="absolute" aria-hidden="true"><path d="M30 10C45 1 78-1 81 9c1 6-5 10-10 12" stroke="#dcdcdc" strokeWidth="1.500" /><circle cx="66" cy="4" r="3" fill="#e4e4e4" /></svg>
        <span className="absolute bottom-0 left-0 font-['Liberation_Serif',serif] text-[19px] font-bold italic leading-6 text-[#f2f2f2] [text-shadow:1px_1px_1px_#bbb]">SuperMap</span>
      </div>
    </div>
  )
}

function StatusBar() {
  return (
    <footer className="relative flex h-[29px] shrink-0 items-center whitespace-nowrap pr-1.5 text-sm text-black">
      <span className="border border-[#c8c8c8] px-[3px] leading-[23px]">选择个数: 0</span>
      <span className="border border-[#c8c8c8] px-[3px] leading-[23px]">比例尺:</span>
      <div className="relative ml-1 flex h-[25px] w-[139px]">
        <select aria-label="比例尺" className="w-full appearance-none bg-white pl-[5px] outline-none"><option>1:76,556.357496...</option></select>
        <span className="pointer-events-none absolute right-0 top-0 flex h-full w-4 items-center justify-center bg-gradient-to-b from-[#ececf4] to-[#a9a6c4]"><Caret /></span>
      </div>
      <button className="mx-[9px]" aria-label="切换"><Icon w={17} h={12}><path d="M0 4.500h16L11 0M17 7.500H1l5 4.500" stroke="#8d96a3" strokeWidth="1.500" /></Icon></button>
      <span className="h-[26px] flex-1 bg-[#e1e1e1] pl-1 leading-[26px]">经度:113°14'44.70",纬度:23°5'27.18"</span>
      <span className="ml-1.5 h-[26px] flex-1 bg-[#e1e1e1] pl-1 leading-[26px]">地理坐标系: GCS_WGS_1984</span>
      <label htmlFor="cx" className="ml-[3px] border border-[#c8c8c8] px-[3px] leading-[23px]">中心点:</label>
      <input id="cx" defaultValue="113.388860" className="ml-[3px] h-[25px] w-[90px] bg-white pl-1.5 outline-none" />
      <input aria-label="中心点纬度" defaultValue="23.159299" className="ml-1.5 h-[25px] w-[90px] bg-white pl-1.5 outline-none" />
      <button className="ml-2" aria-label="复制"><Icon w={18} h={18}><path d="M4 14.500H1.500v-13h10V4" stroke="#8a97a8" strokeDasharray="2 1" /><path d="M6.500 5.500h7l3 3v9h-10z" fill="#fff" stroke="#8a97a8" /><path d="M8 11.500h7M8 14.500h7" stroke="#4b8dc9" strokeWidth="1.500" /></Icon></button>
      <button className="ml-2.5" aria-label="粘贴"><Icon w={18} h={18}><path d="M6 16.500H1.500v-13h12V6M5 3V1h5v2" stroke="#8a97a8" strokeWidth="1.300" /><path d="M8.500 7.500h5l3 3v7h-8z" fill="#fff" stroke="#8a97a8" /><path d="M10 12.500h5M10 15h5" stroke="#4b8dc9" strokeWidth="1.300" /></Icon></button>
      <span className="pointer-events-none absolute right-2 top-1 text-sm leading-5 text-white/60 [text-shadow:0_0_1px_rgba(0,0,0,0.25)]">https://blog.csdn.net/weixin_44585779</span>
    </footer>
  )
}

/* ---------- dialogs ---------- */

const CloseX = ({ color = '#000' }) => <Icon w={13} h={13}><path d="m.5 .5 12 12M12.500.5l-12 12" stroke={color} strokeWidth="1.200" /></Icon>

function LibraryDialog() {
  return (
    <div role="dialog" aria-label="线型符号库" className="absolute left-[603px] top-[162px] flex h-[698px] w-[696px] flex-col justify-between border border-[#a8a8a8] bg-[#f0f0f0] text-[15px] shadow-[0_5px_14px_rgba(0,0,0,0.3)]">
      <div className="flex h-[31px] items-center justify-between bg-white pl-[3px] pr-[15px] text-[#999]">
        <span>线型符号库</span>
        <button aria-label="关闭"><CloseX color="#999" /></button>
      </div>
      <div className="mb-3 mr-7 flex justify-end gap-2.5 text-sm">
        <button className="flex h-[33px] w-[98px] border-2 border-[#0078d7] bg-[#e1e1e1]">
          <span className="flex-1 pl-1 text-center leading-[29px]">新建...</span>
          <span className="flex h-full w-[17px] items-center justify-center border-l border-[#a0a0a0]"><Caret /></span>
        </button>
        <button className="h-[33px] w-[98px] border border-[#adadad] bg-[#e1e1e1]">编辑...</button>
        <button className="h-[33px] w-[98px] border border-[#adadad] bg-[#e1e1e1]">关闭</button>
      </div>
    </div>
  )
}

const Dashes = ({ color }) => (
  <svg width="258" height="1" className="shrink-0" aria-hidden="true">
    <path d="M0 .5h258" stroke={color} strokeWidth="1" strokeDasharray="16 14.250" />
  </svg>
)

const ToolRule = () => <span className="h-4 w-px bg-[#c0c0c0]" />

function Spinner({ id, value, disabled, className = '' }) {
  return (
    <div className={`flex border ${disabled ? 'border-[#c4c8cc] bg-[#e6e6e6] text-[#a8a890]' : 'border-[#adb2b5] bg-[#f0f0f0]'} ${className}`}>
      <input id={id} defaultValue={value} disabled={disabled} className="min-w-0 flex-1 bg-transparent pl-0.5 font-['Liberation_Mono',monospace] text-[13px] outline-none" />
      <button disabled={disabled} aria-label="调整" className="flex w-3.5 items-center justify-center border-l border-inherit">
        <Icon w={4} h={8}><path d="M0 0v8l4-4z" fill="currentColor" /></Icon>
      </button>
    </div>
  )
}

function CheckBox({ id, disabled, size = 'size-[13px]', border = 'border-[#3f7fc0]', tick = '#2b6fb5' }) {
  return (
    <span className={`relative inline-flex shrink-0 ${size}`}>
      <input id={id} type="checkbox" defaultChecked disabled={disabled} className={`size-full appearance-none border bg-white ${border}`} />
      <Check className="pointer-events-none absolute inset-0 size-full" strokeWidth={4} color={tick} />
    </span>
  )
}

const ARROW_DOWN = 'M5 1h5v5h3.500L7.500 12 1.500 6H5z'
const ARROW_UP = 'M5 13h5V8h3.500L7.500 2 1.500 8H5z'

const EDIT_TOOLS = [
  <Icon w={15} h={15}><path d="M5.500.5h4v5h5v4h-5v5h-4v-5h-5v-4h5z" fill="#7be052" stroke="#1f9a10" /></Icon>,
  <Icon w={15} h={15}><path d="m2 2 11 11M13 2 2 13" stroke="#d03a22" strokeWidth="5" /><path d="m2 2 11 11M13 2 2 13" stroke="#f4745c" strokeWidth="2.600" /></Icon>,
  null,
  <Icon w={15} h={16}><path d="M1 1.500h13" stroke="#b8b8b8" strokeWidth="2" /><path d={ARROW_UP} transform="translate(0 2)" fill="#b8b8b8" /></Icon>,
  <Icon w={15} h={15}><path d={ARROW_UP} fill="#b8b8b8" /></Icon>,
  <Icon w={15} h={15}><path d={ARROW_DOWN} transform="translate(0 2)" fill="#2fa3d0" /></Icon>,
  <Icon w={15} h={16}><path d={ARROW_DOWN} transform="translate(0 -1)" fill="#2fa3d0" /><path d="M1 14h13" stroke="#55b5a8" strokeWidth="2" /></Icon>,
  null,
  <Icon w={16} h={16}><rect width="16" height="16" rx="2.500" fill="#2f78cc" /><path d="M8 3v10M3 8h10" stroke="#fff" strokeWidth="2" /></Icon>,
  null,
  <Icon w={15} h={12}><path d="M0 1.500h15" stroke="#14a5d8" strokeWidth="1.500" /><path d="M0 5.500h15" stroke="#128a78" strokeDasharray="3 1" /><path d="M0 10h15" stroke="#0f6f88" strokeWidth="2" /></Icon>,
  null,
  <Icon w={16} h={15}><path d="M.5 .5h15v14H.5z" fill="#fff" stroke="#4f77ad" /><path d="M1 1h14v3H1z" fill="#8fb0d8" /><path d="M5 6.500h8M5 8.500h8M5 10.500h8M5 12.500h8" stroke="#b8c4d0" /><path d="M2 6.500h2M2 8.500h2M2 10.500h2M2 12.500h2" stroke="#5ab06a" /></Icon>,
]

const ENDS = ['折线首部', '折线尾部', '中间节点', '线段中心', '折线中心']
const LINES = [{ id: 1, name: '短横线(系统线型)' }, { id: 2, name: '短横线(系统线型)' }]
const TICKS = Array.from({ length: 11 }, (_, i) => (i + 1) * 20)

const SEGMENT_BLUE = 'border-l-2 border-[#8fb8e8] bg-gradient-to-b from-[#2f7acb] to-[#3049c4] text-[#e4ecf8]'

function PatternBar() {
  return (
    <div className="flex h-6 border border-[#646464] bg-white font-['Liberation_Sans',sans-serif] text-lg leading-[22px]">
      <span className={`w-20 pr-1 text-center ${SEGMENT_BLUE}`}>40</span>
      <span className="w-20 border-l border-white bg-gradient-to-b from-[#e0e0e0] to-[#bdbdbd] pr-1 text-center text-[#444]">40</span>
      <button className={`flex w-10 justify-center pr-1 pt-[3px] ${SEGMENT_BLUE}`} aria-label="添加"><Icon w={13} h={13}><path d="M6.500 0v13M0 6.500h13" stroke="#e4ecf8" strokeWidth="1.500" /></Icon></button>
    </div>
  )
}

function EditorDialog() {
  const [current, setCurrent] = useState(1)

  return (
    <div role="dialog" aria-label="线型符号编辑器" className="absolute left-[530px] top-[197px] w-[842px] border border-[#808080] bg-[#f0f0f0] text-[15px] text-black shadow-[0_6px_22px_rgba(0,0,0,0.42)]">
      <div className="flex h-[31px] items-center justify-between bg-white pl-[3px] pr-[15px]">
        <span>线型符号编辑器</span>
        <button aria-label="关闭"><CloseX /></button>
      </div>

      <div className="flex gap-3 px-4 pt-[15px]">
        <div className="flex w-[329px] shrink-0 flex-col">
          <div className="flex h-7 items-center bg-gradient-to-b from-[#fcfcfc] to-[#f4f4f4] pl-1">
            <button><Icon w={14} h={14}><path d="M.5 .5h13v13H.5z" stroke="#3f6fc8" /><path d="m2.500 4 2.500 6 2.500-6 2 6 2-6" stroke="#3f6fc8" /></Icon></button>
            <span className="mx-[7px]"><ToolRule /></span>
            <button className="mr-[7px]"><ZoomIcon ring="#4f86c4" handle="#c8983a" fill="#dbe9f8" /></button>
            <button className="mr-[7px]"><ZoomIcon minus ring="#4f86c4" handle="#c8983a" fill="#dbe9f8" /></button>
            <button><Icon w={15} h={15}><path d="M.5 .5h14v14H.5z" stroke="#3f73ad" fill="#fff" /><path d="M4.500 4v7M3 5h1M11.500 4v7M10 5h1M7.500 5.500v1.500M7.500 8.500V10" stroke="#3f73ad" /></Icon></button>
            <div className="relative ml-1 h-7 w-[72px]">
              <select aria-label="缩放比例" className="h-full w-full appearance-none bg-white pl-[5px] text-base outline-none"><option>100%</option></select>
              <SmallCaret className="pointer-events-none absolute right-[6px] top-3" />
            </div>
            <span className="ml-1.5 mr-[7px]"><ToolRule /></span>
            <label htmlFor="lineWidth">线宽:</label>
            <Spinner id="lineWidth" value="0.1" className="ml-[7px] h-[25px] w-[57px]" />
          </div>
          <div className="flex h-[122px] items-center justify-center border border-[#646464] bg-white">
            <Dashes color="#1d5490" />
          </div>
          <div className="mt-[7px] flex h-[25px] items-center justify-between pr-[3px] font-['Liberation_Mono','Noto_Sans_CJK_SC',monospace]">
            <label htmlFor="symbolId">符号编号:</label>
            <input id="symbolId" defaultValue="965568" className="h-full w-[79px] border border-[#7a7a7a] bg-white pb-0.5 pl-0.5 text-[13px] outline-none" />
            <label htmlFor="symbolName">符号名称:</label>
            <input id="symbolName" defaultValue="965568" className="h-full w-[79px] border border-[#7a7a7a] bg-white pb-0.5 pl-0.5 text-[13px] outline-none" />
          </div>
          <div className="mt-3.5 flex h-[25px] items-center gap-[7px] bg-gradient-to-b from-[#fcfcfc] to-[#f4f4f4] pl-1">
            {EDIT_TOOLS.map((tool, i) => tool ? <button key={i}>{tool}</button> : <ToolRule key={i} />)}
          </div>
          <ul className="flex h-[297px] flex-col gap-0.5 border border-[#7b8290] bg-white p-0.5">
            {LINES.map(line => (
              <li key={line.id} onClick={() => setCurrent(line.id)} className={`flex h-8 shrink-0 items-center pl-[9px] ${current === line.id ? 'bg-[#316ac5]' : ''}`}>
                <CheckBox id={`line${line.id}`} />
                <label htmlFor={`line${line.id}`} className="ml-[11px] flex h-full flex-col pt-2">
                  <Dashes color="#000" />
                  <span className="mt-[5px] pl-2 leading-[18px]">{line.name}</span>
                </label>
              </li>
            ))}
          </ul>
        </div>

        <div className="-mt-0.5 flex min-w-0 flex-1 flex-col">
          <fieldset className="flex h-[188px] min-w-0 border border-[#dcdcdc]">
            <legend className="ml-1.5 px-0.5 pb-1 leading-[18px]">端头符号</legend>
            <div className="flex h-[166px] gap-2 pl-[7px]">
              <div className="flex w-[147px] flex-col pt-1">
                {ENDS.map(label => (
                  <button key={label} className="flex h-[29px] items-center justify-between border border-[#adb2b5] bg-[#e6e6e6] pl-3 pr-1">
                    <span className="pb-1">{label}</span>
                    <Icon w={11} h={12}><path d="M.5 .5v11l10-5.500z" stroke="#000" /></Icon>
                  </button>
                ))}
              </div>
              <fieldset disabled className="h-[156px] w-[292px] min-w-0 border border-[#dcdcdc] text-[#a0a0a0]">
                <legend className="ml-1.5 px-0.5 pb-1 leading-[18px]">设置</legend>
                <div className="grid grid-cols-[140px_101px_1fr] items-center gap-y-0.5 pl-2.5 pt-[3px] font-['Liberation_Mono','Noto_Sans_CJK_SC',monospace]">
                  <label htmlFor="shape">形状:</label>
                  <div className="relative col-span-2 flex h-[26px] w-[132px] items-center border border-[#ccc] bg-white">
                    <select id="shape" className="absolute inset-0 appearance-none opacity-0" />
                    <span className="ml-2 h-px w-[92px] bg-[#1d5490]" />
                    <ChevronDown size={14} strokeWidth={2} className="ml-auto mr-0.5" />
                  </div>
                  <label htmlFor="angle">旋转角度:</label>
                  <Spinner id="angle" value="0" disabled className="h-[22px]" />
                  <span className="pl-2">度</span>
                  <label htmlFor="symW">符号宽度:</label>
                  <Spinner id="symW" value="0" disabled className="h-[22px]" />
                  <span className="pl-2 pt-1 text-[13px]">mm</span>
                  <label htmlFor="symH">符号高度:</label>
                  <Spinner id="symH" value="0" disabled className="h-[22px]" />
                  <span className="pl-2 pt-1 text-[13px]">mm</span>
                </div>
                <div className="flex items-center gap-1.5 pl-2.5">
                  <CheckBox id="lockRatio" disabled size="size-4" border="border-[#ccc]" tick="#c4c4c4" />
                  <label htmlFor="lockRatio">锁定宽高比例</label>
                </div>
              </fieldset>
            </div>
          </fieldset>

          <fieldset className="mt-[7px] h-[322px] min-w-0 border border-[#dcdcdc] px-[3px]">
            <legend className="ml-[3px] px-0.5 pb-1 leading-[18px]">虚实模式</legend>
            <div className="flex h-[13px] pl-px font-['Liberation_Sans',sans-serif] text-[13px] leading-[13px]">
              <span className="w-[21px]">0</span>
              {TICKS.map(t => <span key={t} className="w-10 shrink-0 text-center">{t}</span>)}
            </div>
            <svg width="459" height="4" className="block" aria-hidden="true">
              {Array.from({ length: 23 }, (_, i) => <path key={i} d={`M${i * 20 + 0.5} ${i % 2 ? 2 : 0}v4`} stroke="#000" />)}
            </svg>
            <div className="border-b-[5px] border-t border-[#ffe5a2]"><PatternBar /></div>
            <div className="h-[235px] bg-white pt-[5px]"><PatternBar /></div>
            <div className="flex h-[15px] items-center justify-between px-0.5 text-[#b8b8b8]">
              <ChevronLeft size={14} strokeWidth={3} /><ChevronRight size={14} strokeWidth={3} />
            </div>
          </fieldset>
        </div>
      </div>

      <div className="mx-4 mt-[7px] flex justify-end gap-2.5 border-t border-[#a0a0a0] pb-4 pr-[5px] pt-[9px] text-sm">
        <button className="h-[27px] w-[98px] border border-[#adadad] bg-[#e1e1e1]">确定</button>
        <button className="h-[27px] w-[98px] border border-[#adadad] bg-[#e1e1e1]">取消</button>
      </div>
    </div>
  )
}

export default function App() {
  return (
    <div className="relative flex h-screen flex-col overflow-hidden bg-[#f0f0f0] font-['Open_Sans','Noto_Sans_CJK_SC',sans-serif] text-black">
      <TitleBar />
      <Ribbon />
      <div className="flex min-h-0 flex-1 pb-px pt-0.5">
        <aside className="flex w-[249px] shrink-0 flex-col gap-1">
          <WorkspaceDock />
          <LayerDock />
        </aside>
        <main className="ml-[5px] flex min-w-0 flex-1 flex-col border-b border-l border-[#a6a6a6]">
          <div className="mb-px flex h-[33px] shrink-0 items-stretch border-b-2 border-[#a6a6a6] pt-0.5 text-sm text-[#555]">
            <button className="flex w-[91px] items-center gap-3 bg-[#a6a6a6] pl-[13px] text-[#f4f4f4]">天河区 <X size={12} strokeWidth={3} /></button>
            <button className="px-3">起始页</button>
            <button className="ml-auto mr-2 text-[#222]" aria-label="标签列表"><Caret /></button>
          </div>
          <MapPane />
          <StatusBar />
        </main>
      </div>

      <LibraryDialog />
      <EditorDialog />

      <svg width="70" height="26" viewBox="0 0 70 26" fill="none" className="pointer-events-none absolute left-[474px] top-[449px]" aria-hidden="true">
        <path d="M1 9h55M48 5c5-3 8 4 19 9-6 2-14 0-17 3-1 2-2 4-2 7" stroke="#0a0af0" strokeWidth="2.200" strokeLinecap="round" />
      </svg>
      <div className="absolute -right-7 top-[286px] flex size-[46px] items-center rounded-full border-2 border-[#bbb] bg-white p-0.5 shadow-[0_4px_8px_rgba(0,0,0,0.3)]">
        <span className="flex size-full items-center rounded-full border border-[#1c8a4c] bg-gradient-to-b from-[#6fdc7c] to-[#3cc456] pl-[3px] font-['Liberation_Sans',sans-serif] text-xs font-bold text-white">33</span>
      </div>
    </div>
  )
}
